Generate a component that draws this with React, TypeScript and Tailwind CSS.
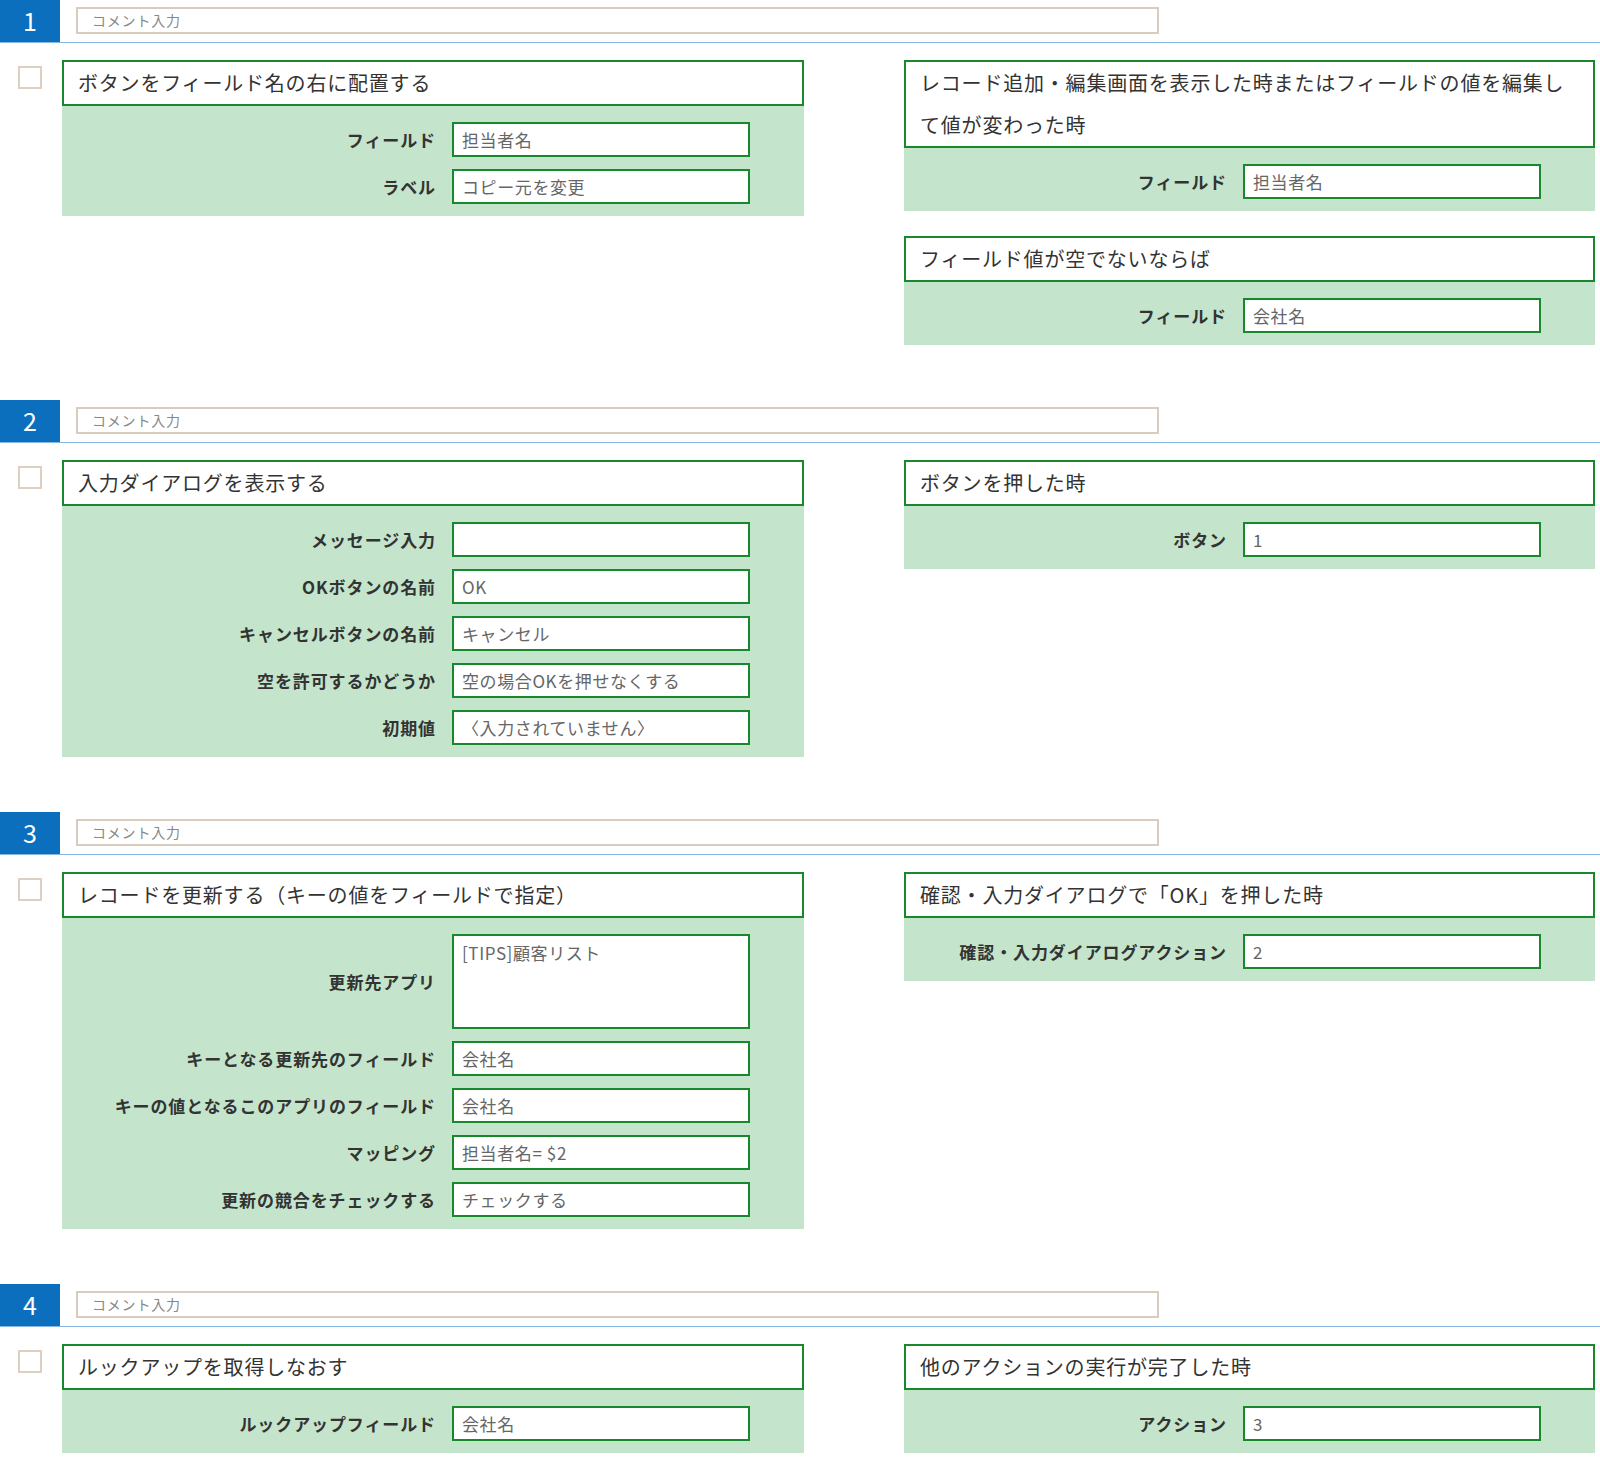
import React from 'react';

type Field = { label: string; value: string; tall?: boolean };
type CardData = { title: string; fields: Field[] };
type SectionData = { no: number; action: CardData; triggers: CardData[] };

const sections: SectionData[] = [
  {
    no: 1,
    action: {
      title: 'ボタンをフィールド名の右に配置する',
      fields: [
        { label: 'フィールド', value: '担当者名' },
        { label: 'ラベル', value: 'コピー元を変更' },
      ],
    },
    triggers: [
      {
        title: 'レコード追加・編集画面を表示した時またはフィールドの値を編集して値が変わった時',
        fields: [{ label: 'フィールド', value: '担当者名' }],
      },
      {
        title: 'フィールド値が空でないならば',
        fields: [{ label: 'フィールド', value: '会社名' }],
      },
    ],
  },
  {
    no: 2,
    action: {
      title: '入力ダイアログを表示する',
      fields: [
        { label: 'メッセージ入力', value: '' },
        { label: 'OKボタンの名前', value: 'OK' },
        { label: 'キャンセルボタンの名前', value: 'キャンセル' },
        { label: '空を許可するかどうか', value: '空の場合OKを押せなくする' },
        { label: '初期値', value: '〈入力されていません〉' },
      ],
    },
    triggers: [
      {
        title: 'ボタンを押した時',
        fields: [{ label: 'ボタン', value: '1' }],
      },
    ],
  },
  {
    no: 3,
    action: {
      title: 'レコードを更新する（キーの値をフィールドで指定）',
      fields: [
        { label: '更新先アプリ', value: '[TIPS]顧客リスト', tall: true },
        { label: 'キーとなる更新先のフィールド', value: '会社名' },
        { label: 'キーの値となるこのアプリのフィールド', value: '会社名' },
        { label: 'マッピング', value: '担当者名= $2' },
        { label: '更新の競合をチェックする', value: 'チェックする' },
      ],
    },
    triggers: [
      {
        title: '確認・入力ダイアログで「OK」を押した時',
        fields: [{ label: '確認・入力ダイアログアクション', value: '2' }],
      },
    ],
  },
  {
    no: 4,
    action: {
      title: 'ルックアップを取得しなおす',
      fields: [{ label: 'ルックアップフィールド', value: '会社名' }],
    },
    triggers: [
      {
        title: '他のアクションの実行が完了した時',
        fields: [{ label: 'アクション', value: '3' }],
      },
    ],
  },
];

const Card: React.FC<{ data: CardData }> = ({ data }) => {
  return (
    <div className="w-full">
      {/* title box */}
      <div className="border-2 border-[#17892c] bg-white pl-[14px] pr-[14px] text-[20px] leading-[42px] tracking-[0.8px] text-[#333]">
        {data.title}
      </div>
      {/* green body */}
      <div className="flex flex-col gap-[12px] bg-[#c4e5cc] pt-4 pb-3 pr-[54px]">
        {data.fields.map((f, i) => (
          <div key={i} className="flex items-center justify-end gap-4">
            <div className="whitespace-nowrap text-[17px] font-bold tracking-[0.9px] text-[#333]">
              {f.label}
            </div>
            <div
              className={
                f.tall
                  ? 'h-[95px] w-[298px] shrink-0 border-2 border-[#17892c] bg-white px-2 pt-[3px] text-[17px] leading-[28px] tracking-[0.6px] text-[#666]'
                  : 'h-[35px] w-[298px] shrink-0 border-2 border-[#17892c] bg-white px-2 text-[17px] leading-[31px] tracking-[0.6px] text-[#666]'
              }
            >
              {f.value}
            </div>
          </div>
        ))}
      </div>
    </div>
  );
};

const Section: React.FC<{ data: SectionData }> = ({ data }) => {
  return (
    <section>
      {/* header: number + comment */}
      <div className="flex items-start border-b border-[#86b7e2]">
        <div className="flex h-[42px] w-[60px] shrink-0 items-center justify-center bg-[#0b6fbd] text-[25px] text-white">
          {data.no}
        </div>
        <div className="ml-4 mt-[7px] h-[27px] w-[1083px] border-2 border-[#d9cbbd] bg-white pl-[14px] text-[14px] leading-[23px] tracking-[0.8px] text-[#888]">
          コメント入力
        </div>
      </div>

      <div className="mt-[17px] flex items-start">
        <div className="w-[62px] shrink-0">
          <div className="ml-[18px] mt-[6px] h-[23px] w-[24px] border-2 border-[#ddd0c3] bg-white" />
        </div>
        <div className="w-[742px] shrink-0">
          <Card data={data.action} />
        </div>
        <div className="ml-[100px] flex w-[691px] shrink-0 flex-col gap-[25px]">
          {data.triggers.map((t, i) => (
            <Card key={i} data={t} />
          ))}
        </div>
      </div>
    </section>
  );
};

export default function App() {
  return (
    <div
      className="min-h-screen w-[1600px] bg-white pb-[26px]"
      style={{ fontFamily: '"Noto Sans CJK JP", "Noto Sans", sans-serif' }}
    >
      <div className="flex flex-col gap-[55px]">
        {sections.map((s) => (
          <Section key={s.no} data={s} />
        ))}
      </div>
    </div>
  );
}
